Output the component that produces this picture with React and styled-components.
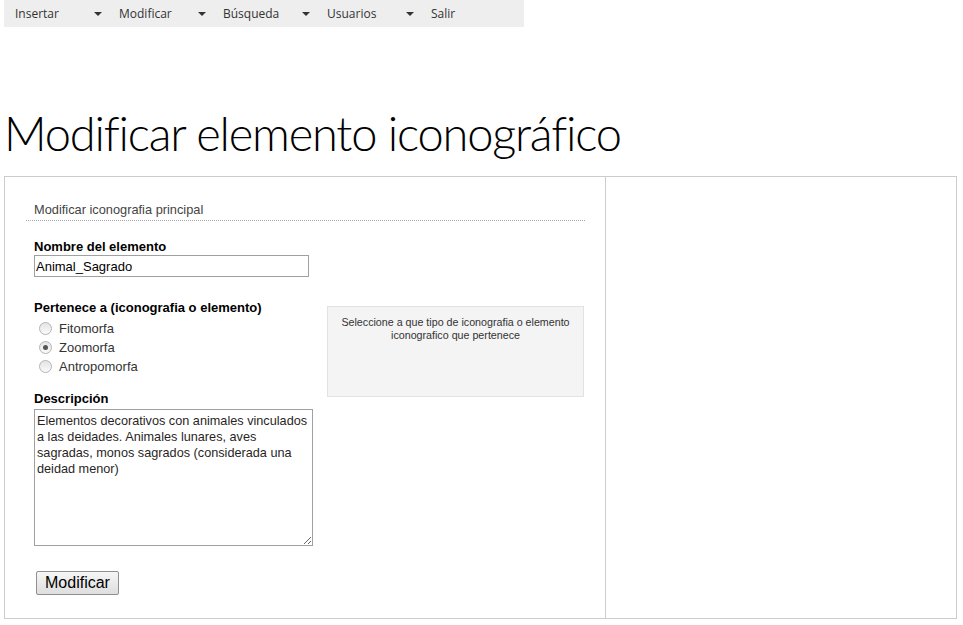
import styled, { createGlobalStyle } from "styled-components";

const GlobalStyle = createGlobalStyle`
  body {
    margin: 0;
    padding: 0 4px;
    background: #fff;
    font-family: "Liberation Sans", Arial, sans-serif;
    color: #000;
  }
`;

const NavBar = styled.ul`
  display: flex;
  width: 520px;
  height: 27px;
  margin: 0;
  padding: 0;
  list-style: none;
  background-color: #eeeeee;
`;

const NavItem = styled.li`
  display: flex;
  align-items: center;
  justify-content: space-between;
  width: 104px;
  padding: 0 6px 0 11px;
  box-sizing: border-box;
  font-family: "Open Sans", sans-serif;
  font-size: 12px;
  color: #333;
`;

const Caret = styled.span`
  width: 0;
  height: 0;
  border-left: 4px solid transparent;
  border-right: 4px solid transparent;
  border-top: 4px solid #333;
`;

const Title = styled.h1`
  margin: 78px 0 15px;
  font-family: "Lato", sans-serif;
  font-weight: 300;
  font-size: 47px;
  line-height: 56px;
  color: #000;
  letter-spacing: -1.2px;
`;

const Panel = styled.div`
  display: grid;
  grid-template-columns: 601px 1fr;
  width: 953px;
  height: 443px;
  box-sizing: border-box;
  border: 1px solid #cccccc;
`;

const LeftCol = styled.div`
  border-right: 1px solid #cccccc;
  padding: 25px 20px 0 21px;
  min-width: 0;
`;

const Form = styled.form`
  margin: 0;
`;

const Legend = styled.div`
  border-bottom: 1px dotted #aaa;
  padding: 0 0 2px 8px;
  font-size: 12.8px;
  color: #444;
  line-height: 16px;
  margin-bottom: 18px;
`;

const Row = styled.div`
  display: flex;
  gap: 14px;
  padding-left: 8px;
`;

const Column = styled.div`
  width: 279px;
`;

const Label = styled.div`
  font-weight: bold;
  font-size: 13px;
  line-height: 16px;
  margin-top: ${(p) => p.$top || 0}px;
`;

const TextInput = styled.input`
  display: block;
  width: 275px;
  height: 22px;
  box-sizing: border-box;
  border: 1px solid #a0a0a0;
  padding: 1px 1px;
  font-family: "Liberation Sans", Arial, sans-serif;
  font-size: 13px;
  color: #000;
`;

const RadioList = styled.div`
  display: flex;
  flex-direction: column;
  margin-top: 3px;
`;

const RadioRow = styled.label`
  display: flex;
  align-items: center;
  height: 19px;
  font-size: 13px;
  color: #333;
`;

const Radio = styled.span`
  width: 11px;
  height: 11px;
  margin: 0 7px 0 5px;
  border-radius: 50%;
  border: 1px solid #b4b4b4;
  background: linear-gradient(#e4e4e4, #fafafa);
  display: flex;
  align-items: center;
  justify-content: center;
  &::after {
    content: "";
    width: 5px;
    height: 5px;
    border-radius: 50%;
    background: ${(p) => (p.$checked ? "#555" : "transparent")};
  }
`;

const TextArea = styled.textarea`
  display: block;
  width: 279px;
  height: 137px;
  margin-top: 2px;
  box-sizing: border-box;
  border: 1px solid #a0a0a0;
  padding: 3px 0 3px 2px;
  font-family: "Liberation Sans", Arial, sans-serif;
  font-size: 12.7px;
  line-height: 16px;
  color: #2a1f1f;
  resize: both;
  overflow: hidden;
`;

const HelpBox = styled.div`
  margin-top: 67px;
  width: 257px;
  height: 91px;
  box-sizing: border-box;
  background: #f4f4f4;
  border: 1px solid #e2e2e2;
  padding: 9px 4px;
  text-align: center;
  font-size: 10.7px;
  line-height: 13px;
  color: #333;
`;

const Button = styled.button`
  margin: 25px 0 0 10px;
  height: 24px;
  padding: 0 8px;
  font-family: "Liberation Sans", Arial, sans-serif;
  font-size: 16px;
  color: #000;
  background: linear-gradient(#f6f6f6, #dedede);
  border: 1px solid #8f8f8f;
  border-radius: 2px;
`;

const RightCol = styled.div``;

const menu = ["Insertar", "Modificar", "Búsqueda", "Usuarios", "Salir"];
const options = [
  { name: "Fitomorfa", checked: false },
  { name: "Zoomorfa", checked: true },
  { name: "Antropomorfa", checked: false },
];

export default function App() {
  return (
    <>
      <GlobalStyle />
      <NavBar>
        {menu.map((m, i) => (
          <NavItem key={m}>
            {m}
            {i < menu.length - 1 && <Caret />}
          </NavItem>
        ))}
      </NavBar>
      <Title>Modificar elemento iconográfico</Title>
      <Panel>
        <LeftCol>
          <Form onSubmit={(e) => e.preventDefault()}>
            <Legend>Modificar iconografia principal</Legend>
            <Row>
              <Column>
                <Label>Nombre del elemento</Label>
                <TextInput defaultValue="Animal_Sagrado" />
                <Label $top={23}>Pertenece a (iconografia o elemento)</Label>
                <RadioList>
                  {options.map((o) => (
                    <RadioRow key={o.name}>
                      <Radio $checked={o.checked} />
                      {o.name}
                    </RadioRow>
                  ))}
                </RadioList>
                <Label $top={15}>Descripción</Label>
                <TextArea defaultValue="Elementos decorativos con animales vinculados a las deidades. Animales lunares, aves sagradas, monos sagrados (considerada una deidad menor)" />
              </Column>
              <HelpBox>
                Seleccione a que tipo de iconografia o elemento iconografico que pertenece
              </HelpBox>
            </Row>
            <Button>Modificar</Button>
          </Form>
        </LeftCol>
        <RightCol />
      </Panel>
    </>
  );
}
